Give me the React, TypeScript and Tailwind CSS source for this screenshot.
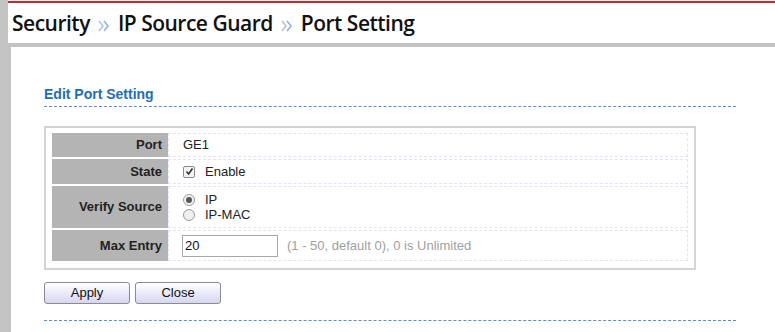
import React from "react";

function Chev() {
  return (
    <svg width="14" height="14" viewBox="0 0 14 14" className="mx-[7px] mt-[3px]">
      <path d="M2 2 L6 7 L2 12" fill="none" stroke="#b8c4d4" strokeWidth="1.6" />
      <path d="M7 2 L11 7 L7 12" fill="none" stroke="#8fb4e0" strokeWidth="1.6" />
    </svg>
  );
}

function Label({ children, h }: { children: React.ReactNode; h: string }) {
  return (
    <div className={`w-[116px] ${h} bg-[#b4b4b4] flex items-center justify-end pr-[6px] font-bold text-[13px] text-[#222]`}>
      {children}
    </div>
  );
}

export default function App() {
  return (
    <div className="w-[775px] h-[332px] bg-white flex overflow-hidden" style={{ fontFamily: "Arial, 'Liberation Sans', sans-serif" }}>
      <div className="w-[8px] h-full bg-[#c3c3c3] shrink-0" />
      <div className="flex-1 flex flex-col">
        <div className="h-[2px] bg-[#c8282c] mt-[1px]" />
        <div className="h-[40px] flex items-center pl-[4px] pt-[2px] text-[21px] font-semibold text-[#111]" style={{ fontFamily: "'Open Sans', sans-serif", letterSpacing: "-0.5px" }}>
          <span>Security</span>
          <Chev />
          <span>IP Source Guard</span>
          <Chev />
          <span>Port Setting</span>
        </div>
        <div className="h-[4px] bg-[#c3c3c3]" />
        <div className="flex-1 flex">
          <div className="w-[3px] bg-[#c3c3c3]" />
          <div className="flex-1 pl-[33px] pt-[37px]">
            <div className="w-[692px] h-[23px] border-b border-dashed border-[#5b8fd0] text-[14px] leading-[20px] font-bold text-[#1f6dba]">
              Edit Port Setting
            </div>
            <div className="mt-[19px] w-[652px] border-2 border-[#d4d4d4] pt-[5px] px-[6px] pb-[7px]">
              <div className="flex flex-col gap-[2px]">
                <div className="flex">
                  <Label h="h-[24px]">Port</Label>
                  <div className="flex-1 border border-dashed border-[#e2e2fa] flex items-center pl-[14px] text-[13px] text-[#222]">GE1</div>
                </div>
                <div className="flex">
                  <Label h="h-[25px]">State</Label>
                  <div className="flex-1 border border-dashed border-[#e2e2fa] flex items-center pl-[14px] text-[13px] text-[#222]">
                    <span className="w-[12px] h-[12px] border border-[#8a8a8a] rounded-[2px] bg-[#f4f4f4] flex items-center justify-center mr-[10px]">
                      <svg width="9" height="9" viewBox="0 0 9 9"><path d="M1.5 4.5 L3.6 7 L7.5 1.5" fill="none" stroke="#333" strokeWidth="1.6" /></svg>
                    </span>
                    Enable
                  </div>
                </div>
                <div className="flex">
                  <Label h="h-[42px]">Verify Source</Label>
                  <div className="flex-1 border border-dashed border-[#e2e2fa] flex flex-col justify-center pl-[14px] text-[13px] text-[#222] gap-[1px]">
                    <div className="flex items-center h-[14px]">
                      <span className="w-[12px] h-[12px] rounded-full border border-[#9a9a9a] bg-[#f0f0f0] flex items-center justify-center mr-[10px]">
                        <span className="w-[6px] h-[6px] rounded-full bg-[#555]" />
                      </span>
                      IP
                    </div>
                    <div className="flex items-center h-[14px]">
                      <span className="w-[12px] h-[12px] rounded-full border border-[#9a9a9a] bg-[#f0f0f0] mr-[10px]" />
                      IP-MAC
                    </div>
                  </div>
                </div>
                <div className="flex">
                  <Label h="h-[31px]">Max Entry</Label>
                  <div className="flex-1 border border-dashed border-[#e2e2fa] flex items-center pl-[13px] text-[13px]">
                    <div className="w-[96px] h-[22px] border border-[#a8a8a8] flex items-center pl-[2px] text-[#111]">20</div>
                    <span className="ml-[9px] text-[#a0a0a0]">(1 - 50, default 0), 0 is Unlimited</span>
                  </div>
                </div>
              </div>
            </div>
            <div className="flex gap-[5px] mt-[12px]">
              <button className="w-[86px] h-[22px] rounded-[3px] border border-[#8c8c8c] text-[13px] text-[#111] bg-gradient-to-b from-white to-[#d6d6f2]">Apply</button>
              <button className="w-[86px] h-[22px] rounded-[3px] border border-[#8c8c8c] text-[13px] text-[#111] bg-gradient-to-b from-white to-[#d6d6f2]">Close</button>
            </div>
            <div className="w-[692px] mt-[16px] border-t border-dashed border-[#5b8fd0]" />
          </div>
        </div>
      </div>
    </div>
  );
}
